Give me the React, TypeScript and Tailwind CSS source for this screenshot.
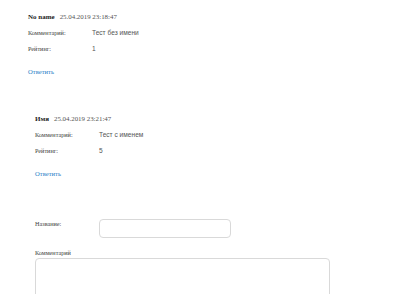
const serif = { fontFamily: '"Liberation Serif", "Times New Roman", serif' };

function Row({ label, value }: { label: string; value: string }) {
  return (
    <div className="flex h-[16px] items-center">
      <span className="w-[64px] text-[6.2px] text-[#444]">{label}</span>
      <span className="font-['Liberation_Sans',Arial,sans-serif] text-[6.6px] text-[#555]">{value}</span>
    </div>
  );
}

function Review({ name, date, comment, rating }: { name: string; date: string; comment: string; rating: string }) {
  return (
    <div>
      <div className="flex h-[16px] items-center gap-[5px]">
        <span className="text-[7px] font-bold text-[#222]">{name}</span>
        <span className="text-[6.9px] text-[#555]">{date}</span>
      </div>
      <Row label="Комментарий:" value={comment} />
      <Row label="Рейтинг:" value={rating} />
      <a href="#" className="mt-[10px] block text-[6.6px] leading-[10px] text-[#2d7fc8]">
        Ответить
      </a>
    </div>
  );
}

export default function App() {
  return (
    <div className="h-[294px] overflow-hidden bg-white pl-[28px] pt-[9px]" style={serif}>
      <Review name="No name" date="25.04.2019 23:18:47" comment="Тест без имени" rating="1" />
      <div className="ml-[7px] mt-[34px]">
        <Review name="Имя" date="25.04.2019 23:21:47" comment="Тест с именем" rating="5" />
        <div className="mt-[40px] flex items-start">
          <span className="w-[64px] text-[6.2px] leading-[10px] text-[#444]">Название:</span>
          <input className="h-[19px] w-[132px] rounded-[4px] border border-[#d9d9d9] bg-white" />
        </div>
        <div className="mt-[10px] text-[6.2px] leading-[10px] text-[#444]">Комментарий</div>
        <textarea className="block h-[60px] w-[295px] resize-none rounded-[4px] border border-[#d9d9d9] bg-white" />
      </div>
    </div>
  );
}
